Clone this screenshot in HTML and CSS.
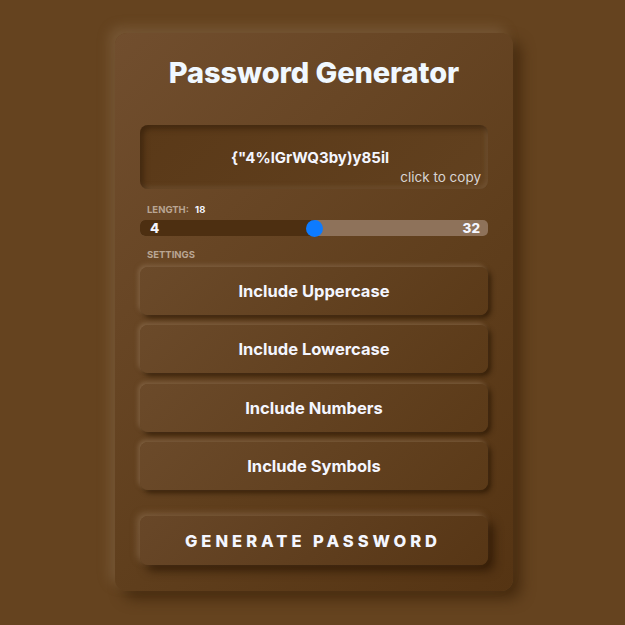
FILE: index.html
```html
<!DOCTYPE html>
<html>
<head>
<meta charset="utf-8">
<link rel="stylesheet" href="styles.css">
</head>
<body>
<div class="card">
  <h1 class="title">Password Generator</h1>
  <div class="result">
    <span class="pw">{"4%lGrWQ3by)y85il</span>
    <span class="copy">click to copy</span>
  </div>
  <div class="label">LENGTH: <span class="val">18</span></div>
  <div class="slider">
    <div class="fill"></div>
    <span class="min">4</span>
    <span class="thumb"></span>
    <span class="max">32</span>
  </div>
  <div class="label settings">SETTINGS</div>
  <div class="options">
    <button class="opt">Include Uppercase</button>
    <button class="opt">Include Lowercase</button>
    <button class="opt">Include Numbers</button>
    <button class="opt">Include Symbols</button>
  </div>
  <button class="generate">GENERATE PASSWORD</button>
</div>
</body>
</html>
```
FILE: styles.css
```css
html, body { margin: 0; padding: 0; }
body {
  background: #65431f;
  font-family: "Inter", "Noto Sans", sans-serif;
  width: 625px;
  height: 625px;
  overflow: hidden;
}
.card {
  width: 398px;
  box-sizing: border-box;
  margin: 33px 0 0 115px;
  padding: 20px 25px 26px;
  border-radius: 12px;
  background: linear-gradient(135deg, #714e2e 0%, #5f3e1c 60%, #553413 100%);
  box-shadow: -6px -6px 12px rgba(140,110,80,0.45), 8px 8px 14px rgba(60,35,10,0.75);
}
.title {
  margin: 0;
  height: 40px;
  line-height: 40px;
  text-align: center;
  font-size: 29px;
  font-weight: 800;
  color: #f0f8ff;
  letter-spacing: -0.1px;
}
.result {
  position: relative;
  margin-top: 32px;
  height: 64px;
  border-radius: 8px;
  background: linear-gradient(135deg, #5a3918, #62411f);
  box-shadow: inset 3px 3px 6px rgba(50,28,8,0.7), inset -2px -2px 5px rgba(140,110,80,0.45);
  display: flex;
  align-items: center;
  justify-content: center;
}
.pw {
  color: #f4f6ff;
  font-weight: 700;
  font-size: 15px;
  margin: 1px 8px 0 0;
}
.copy {
  position: absolute;
  right: 7px;
  bottom: 4px;
  font-size: 13.5px;
  color: #d8d4d4;
}
.label {
  margin: 15px 0 4px 7px;
  font-size: 9.5px;
  font-weight: 700;
  color: #b9a593;
  line-height: 12px;
}
.label .val { color: #f4f6ff; margin-left: 4px; }
.slider {
  position: relative;
  height: 16px;
  border-radius: 5px;
  background: #8e725a;
}
.fill {
  position: absolute;
  left: 0; top: 0; bottom: 0;
  width: 175px;
  border-radius: 5px 0 0 5px;
  background: #4d2f11;
}
.thumb {
  position: absolute;
  left: 165.5px;
  top: -0.5px;
  width: 17px;
  height: 17px;
  border-radius: 50%;
  background: #0d7bff;
}
.min, .max {
  position: absolute;
  top: 0;
  line-height: 16px;
  font-size: 13.5px;
  font-weight: 800;
  color: #f4f6ff;
}
.min { left: 10px; }
.max { right: 8px; }
.settings { margin-top: 13px; margin-bottom: 6px; }
.options {
  display: flex;
  flex-direction: column;
  gap: 10.4px;
}
button {
  font-family: inherit;
  border: none;
  cursor: pointer;
  width: 100%;
  color: #f4f6ff;
  border-radius: 8px;
}
.opt {
  height: 48px;
  font-size: 16.5px;
  font-weight: 700;
  background: linear-gradient(135deg, #6b4a2a 0%, #5b3a18 100%);
  box-shadow: -2px -2px 4px rgba(150,120,90,0.55), 3px 3px 5px rgba(45,25,5,0.8);
}
.generate {
  margin-top: 26px;
  height: 49px;
  font-size: 16.5px;
  font-weight: 800;
  letter-spacing: 4px;
  padding-left: 4px;
  background: linear-gradient(135deg, #684728 0%, #573615 100%);
  box-shadow: -3px -3px 6px rgba(150,120,90,0.5), 6px 6px 10px rgba(40,20,3,0.7);
}
```
